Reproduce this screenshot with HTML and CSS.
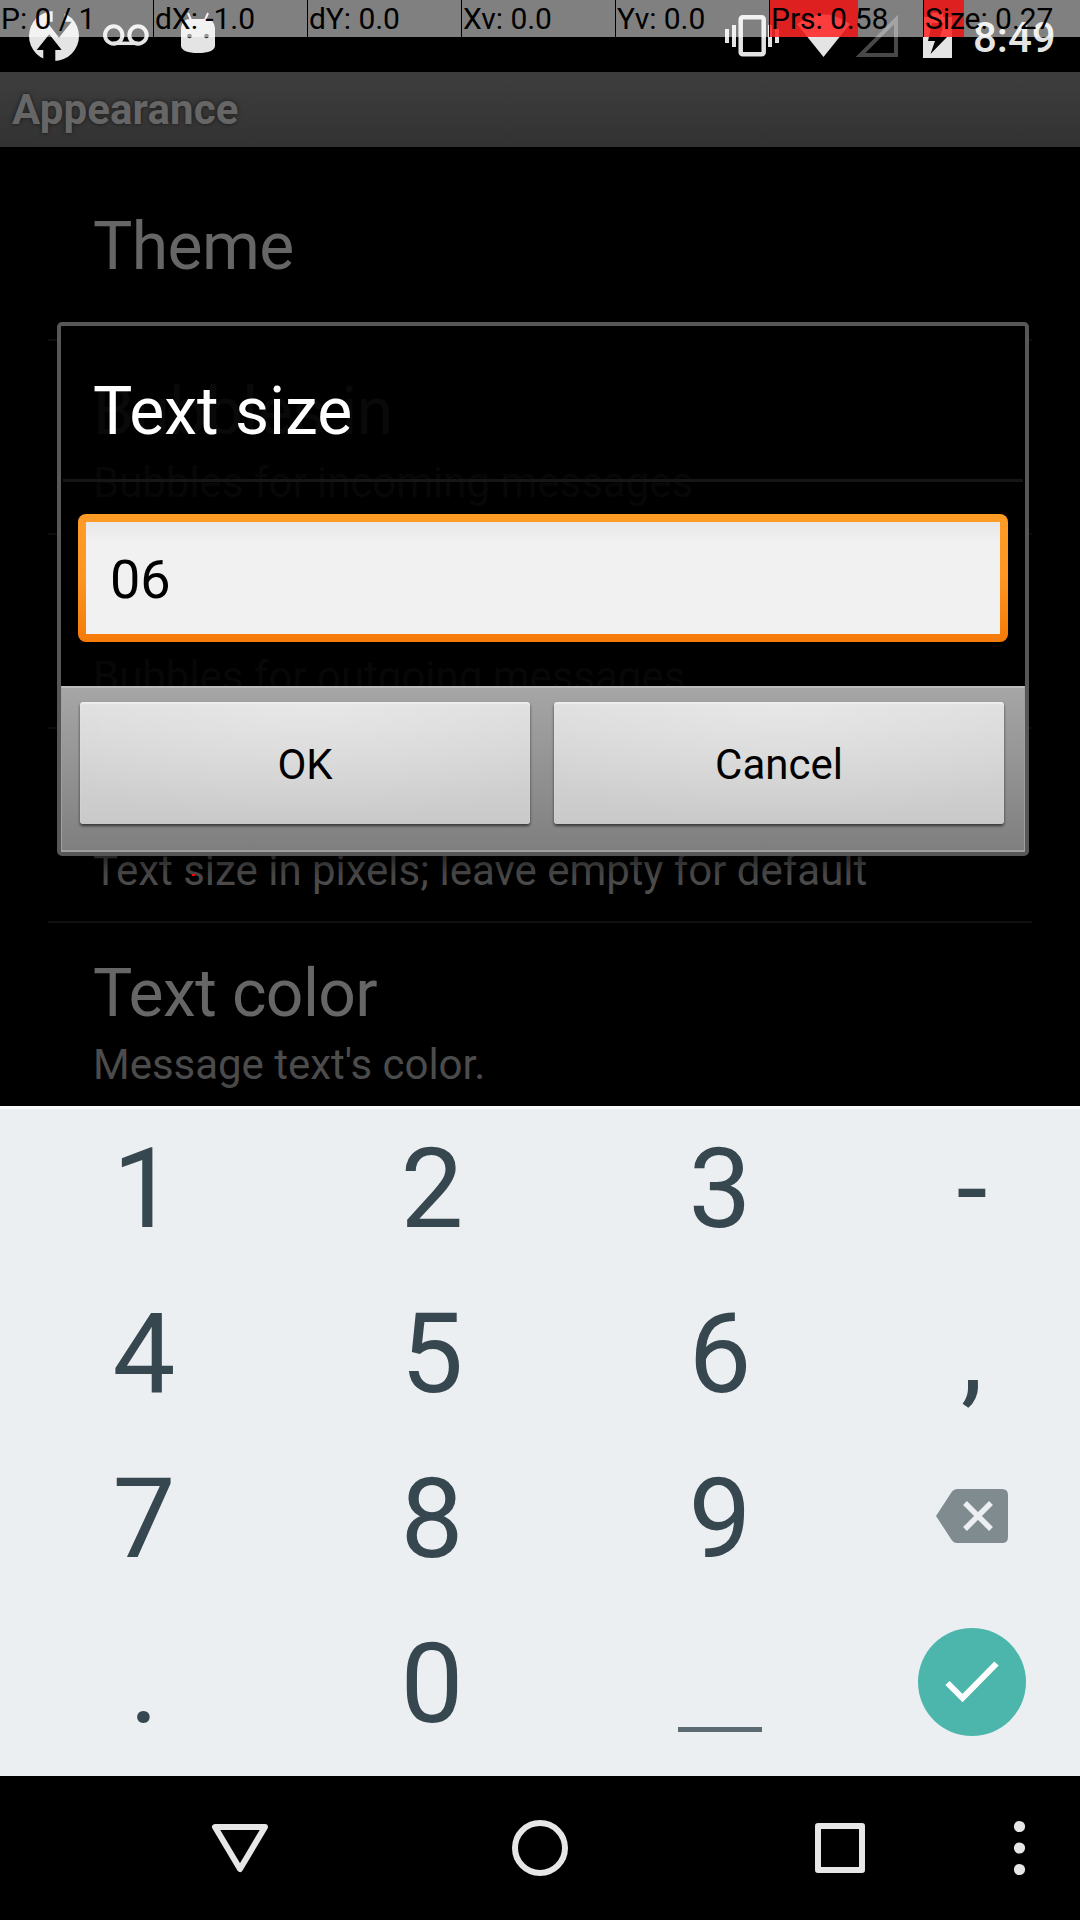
FILE: index.html
```html
<!DOCTYPE html>
<html lang="en">
<head>
<meta charset="utf-8">
<title>Appearance</title>
<link rel="stylesheet" href="styles.css">
</head>
<body>
<div class="screen">
  <header class="status">
    <svg class="status-icons" viewBox="0 0 960 72" width="960" height="72">
      <g fill="#e4e4e4">
        <circle cx="54" cy="36" r="25"/>
        <path fill="#000" d="M43.300 62V50H36.700L49.300 34.300 61.700 50H55.300V62ZM52.700 10V21.700H46.700L59 37.500 71.700 21.700H64.700V10Z"/>
        <path d="M181 28Q182 19 190 19H206Q214 19 215 28V46Q214 53 198 53Q182 53 181 46Z"/>
        <path d="M188 13 191 20M208 13 205 20" stroke="#e4e4e4" stroke-width="2"/>
        <path d="M725 29h4v14h-4zM732 25h4v22h-4zM768 25h4v22h-4zM775 29h4v14h-4z"/>
        <path d="M797 24Q823.500 5 850 24L823.500 57Z"/>
        <path d="M923 17H932V13H943V17H952V58H923Z"/>
      </g>
      <g fill="#333"><circle cx="189.500" cy="36" r="2.300"/><circle cx="206.500" cy="36" r="2.300"/></g>
      <g fill="none" stroke="#e4e4e4">
        <circle cx="113.700" cy="35" r="8.700" stroke-width="4"/>
        <circle cx="138" cy="35" r="8.700" stroke-width="4"/>
        <path d="M113 43.300H138" stroke-width="3.500"/>
        <rect x="740.700" y="17.200" width="23" height="37" rx="2" stroke-width="4.500"/>
      </g>
      <path d="M860.500 55 896 55V19.500Z" fill="none" stroke="#484848" stroke-width="4"/>
      <path d="M932 23 944 23 940 37H947L930.500 54 935 41H928Z" fill="#000"/>
    </svg>
    <time class="clock">8:49</time>
  </header>

  <main class="app">
    <h1 class="title-bar">Appearance</h1>
    <ul class="prefs">
      <li class="pref pref-single"><span class="pref-title">Theme</span></li>
      <li class="pref"><span class="pref-title">Bubbles in</span><span class="pref-summary">Bubbles for incoming messages</span></li>
      <li class="pref"><span class="pref-title"></span><span class="pref-summary">Bubbles for outgoing messages</span></li>
      <li class="pref"><span class="pref-title"></span><span class="pref-summary">Text size in pixels; leave empty for default</span></li>
      <li class="pref"><span class="pref-title">Text color</span><span class="pref-summary">Message text's color.</span></li>
    </ul>
    <div class="dialog-layer">
      <section class="dialog">
        <h2 class="dialog-title">Text size</h2>
        <div class="dialog-body"><div class="field">06</div></div>
        <div class="dialog-actions">
          <button class="btn">OK</button>
          <button class="btn">Cancel</button>
        </div>
      </section>
    </div>
    <i class="touch-point"></i>
  </main>

  <section class="keyboard">
    <span class="key">1</span><span class="key">2</span><span class="key">3</span><span class="key">-</span>
    <span class="key">4</span><span class="key">5</span><span class="key">6</span><span class="key">,</span>
    <span class="key">7</span><span class="key">8</span><span class="key">9</span>
    <span class="key key-icon">
      <svg viewBox="0 0 72 54" width="72" height="54"><path d="M21 0H66Q72 0 72 6V48Q72 54 66 54H21Q18 54 16 51.500L0 27 16 2.500Q18 0 21 0Z" fill="#808b8f"/><path d="M29 14 55 40M55 14 29 40" stroke="#ebeff1" stroke-width="5.500"/></svg>
    </span>
    <span class="key">.</span><span class="key">0</span>
    <span class="key key-space"><i class="space-mark"></i></span>
    <span class="key key-icon key-done">
      <svg viewBox="0 0 108 108" width="108" height="108"><circle cx="54" cy="54" r="54" fill="#4db6ac"/><path d="M29.500 55 44.500 70 78.500 35.500" fill="none" stroke="#fff" stroke-width="6"/></svg>
    </span>
  </section>

  <nav class="nav">
    <svg viewBox="0 0 1080 144" width="1080" height="144">
      <g fill="none" stroke="#e6e6e6" stroke-width="6" stroke-linejoin="round">
        <path d="M215 51H265L240 93Z"/>
        <circle cx="540" cy="72" r="25"/>
        <rect x="818" y="50" width="44" height="44"/>
      </g>
      <g fill="#e6e6e6"><circle cx="1019.500" cy="50.500" r="5.600"/><circle cx="1019.500" cy="72" r="5.600"/><circle cx="1019.500" cy="93.500" r="5.600"/></g>
    </svg>
  </nav>

  <div class="pointer-info">
    <span class="info">P: 0 / 1</span>
    <span class="info">dX: -1.0</span>
    <span class="info">dY: 0.0</span>
    <span class="info">Xv: 0.0</span>
    <span class="info">Yv: 0.0</span>
    <span class="info info-pressure">Prs: 0.58</span>
    <span class="info info-size">Size: 0.27</span>
  </div>
</div>
</body>
</html>
```
FILE: styles.css
```css
* { box-sizing: border-box; }
body { margin: 0; background: #000; font-family: Roboto, sans-serif; }
h1, h2, ul { margin: 0; padding: 0; font-weight: 400; }

.screen {
  position: relative;
  display: flex;
  flex-direction: column;
  width: 1080px;
  height: 1920px;
  overflow: hidden;
  background: #000;
}

/* status bar */
.status { display: flex; height: 72px; flex: none; }
.status-icons { flex: none; }
.clock {
  padding: 13px 0 0 13px;
  color: #e4e4e4;
  font-size: 42px;
  font-weight: 500;
  line-height: 50px;
}

/* pointer location strip laid over the status bar */
.pointer-info {
  position: absolute;
  inset: 0 0 auto 0;
  display: grid;
  grid-template-columns: repeat(6, 153px) 1fr;
  grid-template-rows: 37px;
  column-gap: 1px;
}
.info {
  padding-left: 1px;
  background: rgba(255, 255, 255, .5);
  box-shadow: -1px 0 #000;
  font-size: 30px;
  line-height: 38px;
  letter-spacing: -.05px;
  white-space: nowrap;
}
.info-pressure { background: linear-gradient(rgba(255, 0, 0, .75), rgba(255, 0, 0, .75)) 0 0 / 88px 100% no-repeat, rgba(255, 255, 255, .5); }
.info-size { background: linear-gradient(rgba(255, 0, 0, .75), rgba(255, 0, 0, .75)) 0 0 / 40px 100% no-repeat, rgba(255, 255, 255, .5); }

/* settings list */
.app { position: relative; height: 1034px; flex: none; overflow: hidden; }
.title-bar {
  height: 75px;
  padding: 13px 12px 0;
  background: linear-gradient(#3e3e3e, #323232);
  color: #666;
  font-size: 42px;
  font-weight: 700;
  line-height: 49px;
  letter-spacing: .12px;
  text-shadow: 0 0 4px rgba(0, 0, 0, .6);
}
.prefs { list-style: none; margin: 0 48px; }
.pref {
  display: flex;
  flex-direction: column;
  gap: 8px;
  height: 194px;
  padding: 32px 45px 0;
  border-bottom: 2px solid #101010;
}
.pref-single { padding-top: 61px; }
.pref-title { height: 77px; color: #666; font-size: 66px; line-height: 77px; letter-spacing: -.6px; }
.pref-summary { color: #4c4c4c; font-size: 42px; line-height: 49px; letter-spacing: -.02px; white-space: nowrap; }

/* dialog */
.dialog-layer {
  position: absolute;
  inset: 0;
  display: flex;
  align-items: center;
  justify-content: center;
  padding-left: 6px;
}
.dialog {
  width: 972px;
  height: 534px;
  display: flex;
  flex-direction: column;
  border: 4px solid #575757;
  border-radius: 5px;
  background: rgba(0, 0, 0, .91);
  box-shadow: 0 6px 22px rgba(0, 0, 0, .7);
}
.dialog-title {
  height: 156px;
  margin: 0 2px;
  padding: 47px 30px 0;
  border-bottom: 3px solid #161616;
  color: #fff;
  font-size: 66px;
  line-height: 77px;
}
.dialog-body { flex: 1; padding: 32px 17px 0; }
.field {
  height: 128px;
  padding: 26px 24px 0;
  border: 8px solid transparent;
  border-radius: 8px;
  background:
    linear-gradient(rgba(0, 0, 0, .04), transparent 18%) padding-box,
    linear-gradient(#f1f1f1, #f1f1f1) padding-box,
    linear-gradient(#ff9c26, #fd9522 50%, #f57a08) border-box;
  color: #000;
  font-size: 54px;
  line-height: 64px;
}
.dialog-actions {
  display: flex;
  gap: 24px;
  height: 166px;
  padding: 14px 20px 0 18px;
  border: solid #a0a0a0;
  border-width: 2px 1px;
  border-top-color: #bcbcbc;
  background: linear-gradient(#a6a6a6, #7f7f7f);
}
.btn {
  flex: 1;
  height: 122px;
  padding: 2px 0 0;
  border: 0;
  border-radius: 3px;
  background: radial-gradient(ellipse 70% 100% at 50% 0, rgba(255, 255, 255, .3), transparent), linear-gradient(#dedede, #c9c9c9);
  box-shadow: 0 2px 3px rgba(0, 0, 0, .6), inset 0 2px 1px #eee;
  color: #000;
  font: 42px/49px Roboto, sans-serif;
}
.touch-point { position: absolute; left: 192px; top: 802px; width: 3px; height: 2px; background: #f00; }

/* numeric keyboard */
.keyboard {
  position: relative;
  display: grid;
  grid-template-columns: repeat(3, 288px) 216px;
  grid-template-rows: repeat(4, 165px);
  height: 670px;
  flex: none;
  background: #ebeff1;
  box-shadow: inset 0 3px #f8fafa, 0 0 24px #000;
}
.key { color: #37474f; font-size: 112px; line-height: 165px; text-align: center; }
.key-icon { display: flex; align-items: center; justify-content: center; padding-bottom: 5px; }
.key-done { padding-bottom: 3px; }
.key-space { display: flex; align-items: flex-end; justify-content: center; padding-bottom: 34px; }
.space-mark { width: 84px; height: 5px; background: #5c6b72; }

.nav { height: 144px; flex: none; }
.nav svg { display: block; }
```
